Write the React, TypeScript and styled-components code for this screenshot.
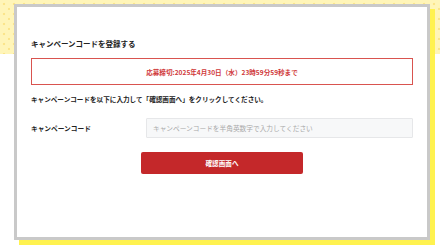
import React from "react";
import styled, {createGlobalStyle} from "styled-components";

const GlobalStyle = createGlobalStyle`
  html, body {
    margin: 0;
    padding: 0;
    background: #fff;
  }
  body {
    font-family: "Noto Sans CJK JP", "Noto Sans", sans-serif;
    color: #222;
  }
  * {
    box-sizing: border-box;
  }
`

export default function App() {
	return (
		<>
			<GlobalStyle/>
			<Page>
				<Card>
					<Title>キャンペーンコードを登録する</Title>
					<Deadline>応募締切:2025年4月30日（水）23時59分59秒まで</Deadline>
					<Lead>キャンペーンコードを以下に入力して「確認画面へ」をクリックしてください。</Lead>
					<FormRow>
						<Label htmlFor="code">キャンペーンコード</Label>
						<Input id="code" placeholder="キャンペーンコードを半角英数字で入力してください"/>
					</FormRow>
					<Submit type="button">確認画面へ</Submit>
				</Card>
			</Page>
		</>
	)
}

const Page = styled.div`
  position: relative;
  width: 440px;
  height: 251px;
  padding: 4px 10px 0 14px;
  overflow: hidden;

  &::before {
    content: "";
    position: absolute;
    top: 0;
    left: 0;
    right: 0;
    height: 54px;
    background:
      radial-gradient(circle at 4px 4px, #fbe58a 1px, transparent 1.6px) 0 0 / 10px 10px,
      radial-gradient(circle at 9px 9px, #fbe58a 1px, transparent 1.6px) 0 0 / 10px 10px,
      #fff5b8;
  }
`
const Card = styled.div`
  position: relative;
  z-index: 1;
  width: 416px;
  height: 236px;
  background: #fff;
  border: 3px solid #c9c9c9;
  box-shadow: 5px 5px 0 0 #fff24f;
  padding: 32px 14px 0 14px;
  display: flex;
  flex-direction: column;
`
const Title = styled.h2`
  margin: 0;
  font-size: 7.5px;
  line-height: 10px;
  font-weight: 700;
  color: #222;
`
const Deadline = styled.div`
  margin-top: 9px;
  height: 27px;
  border: 1.5px solid #d9534f;
  display: flex;
  align-items: center;
  justify-content: center;
  font-size: 6.6px;
  font-weight: 700;
  color: #d0393a;
`
const Lead = styled.p`
  margin: 9px 0 0 0;
  font-size: 6.6px;
  line-height: 10px;
  font-weight: 700;
  color: #222;
`
const FormRow = styled.div`
  margin-top: 14px;
  display: flex;
  align-items: center;
`
const Label = styled.label`
  width: 115px;
  flex-shrink: 0;
  font-size: 6.7px;
  font-weight: 700;
  color: #222;
`
const Input = styled.input`
  flex: 1;
  height: 20px;
  padding: 0 6px;
  background: #f7f8f9;
  border: 1px solid #e6e7e9;
  border-radius: 1px;
  font-family: inherit;
  font-size: 6.7px;
  outline: none;

  &::placeholder {
    color: #a9a9a9;
  }
`
const Submit = styled.button`
  align-self: center;
  margin-top: 14px;
  width: 162px;
  height: 22px;
  border: none;
  border-radius: 2px;
  background: #c4282a;
  color: #fff;
  font-family: inherit;
  font-size: 6.6px;
  font-weight: 700;
  cursor: pointer;
`
